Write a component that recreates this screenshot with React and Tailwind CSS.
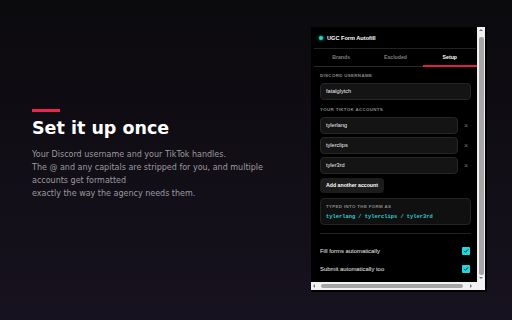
const accounts = ['tylerlang', 'tylerclips', 'tyler3rd']

function Label({ children }) {
  return (
    <div className="h-[6px] text-[4.4px] leading-[6px] font-bold uppercase tracking-[0.35px] text-[#8a8a8a]">
      {children}
    </div>
  )
}

function Check() {
  return (
    <div className="flex h-[8px] w-[8px] items-center justify-center rounded-[1px] bg-[#22d6dc]">
      <svg viewBox="0 0 10 10" className="h-[6px] w-[6px]">
        <path d="M2 5.2l2 2 4-4.4" fill="none" stroke="#0b2b2c" strokeWidth="1.6" strokeLinecap="round" strokeLinejoin="round" />
      </svg>
    </div>
  )
}

function Panel() {
  return (
    <div className="mt-[27px] flex h-[265px] w-[176px] shrink-0 flex-col bg-black pb-[2px] pr-[2px] font-['Liberation_Sans',sans-serif]">
      <div className="flex min-h-0 flex-1">
        <div className="flex-1 overflow-hidden">
          {/* header */}
          <div className="ml-[3px] mr-[1px] flex h-[22px] items-center gap-[4px] border-b border-[#222] pl-[5px] pt-[1px]">
            <div className="h-[4px] w-[4px] rounded-full bg-[#2dd4bf] shadow-[0_0_3px_#2dd4bf]" />
            <span className="text-[5.6px] font-bold text-white">UGC Form Autofill</span>
          </div>

          {/* tabs */}
          <div className="ml-[3px] flex h-[18px] border-b border-[#2a2a2a] pt-[1px] text-[5.2px] font-bold">
            <div className="flex flex-1 items-center justify-center text-[#7d7d7d]">Brands</div>
            <div className="flex flex-1 items-center justify-center text-[#7d7d7d]">Excluded</div>
            <div className="-mb-px flex flex-1 items-center justify-center border-b-2 border-[#e11d48] text-white">Setup</div>
          </div>

          <div className="flex flex-col pl-[9px] pr-[6px] pt-[6px]">
            <Label>Discord username</Label>
            <div className="mt-[4px] flex h-[17px] items-center rounded-[4px] border border-[#262626] bg-[#141414] px-[5px] text-[5.6px] font-medium text-[#ececec]">
              fatalglytch
            </div>

            <div className="mt-[7px]">
              <Label>Your TikTok accounts</Label>
            </div>
            <div className="mt-[4px] flex flex-col gap-[3px]">
              {accounts.map((a) => (
                <div key={a} className="flex items-center">
                  <div className="flex h-[17px] flex-1 items-center rounded-[4px] border border-[#262626] bg-[#141414] px-[5px] text-[5.6px] font-medium text-[#ececec]">
                    {a}
                  </div>
                  <div className="flex w-[13px] justify-center pl-[3px] text-[7px] leading-none text-[#777]">×</div>
                </div>
              ))}
            </div>

            <div className="mt-[4px] flex h-[15px] w-[64px] items-center justify-center rounded-[4px] bg-[#1c1c1c] text-[5.2px] font-bold text-white">
              Add another account
            </div>

            <div className="mt-[5px] flex h-[27px] flex-col justify-center gap-[4px] rounded-[4px] border border-[#232323] bg-[#101010] px-[5px]">
              <Label>Typed into the form as</Label>
              <div className="font-['Liberation_Mono',monospace] text-[5.4px] leading-[6px] font-bold text-[#25d0d6]">
                tylerlang / tylerclips / tyler3rd
              </div>
            </div>

            <div className="mt-[8px] border-t border-[#222]" />

            <div className="mt-[12px] flex h-[10px] items-center justify-between pr-[1px] text-[5.9px] font-medium text-[#eeeeee]">
              <span>Fill forms automatically</span>
              <Check />
            </div>
            <div className="mt-[8px] flex h-[10px] items-center justify-between pr-[1px] text-[5.9px] font-medium text-[#eeeeee]">
              <span>Submit automatically too</span>
              <Check />
            </div>
            <div className="mt-[7px] whitespace-nowrap text-[5px] leading-[6px] text-[#6b6b6b]">
              You can turn these off any time.
            </div>
          </div>
        </div>

        {/* vertical scrollbar */}
        <div className="flex w-[8px] flex-col items-center bg-[#f1f1f1] py-[2px]">
          <div className="h-0 w-0 border-x-[2px] border-b-[2px] border-x-transparent border-b-[#777]" />
          <div className="mt-[6px] w-[5px] flex-1 rounded-[2px] bg-[#a6a6a6]" />
          <div className="mt-[2px] mb-[1px] h-0 w-0 border-x-[2px] border-t-[2px] border-x-transparent border-t-[#777]" />
        </div>
      </div>

      {/* horizontal scrollbar */}
      <div className="flex h-[8px] items-center bg-[#f1f1f1] pl-[2px]">
        <div className="h-0 w-0 border-y-[2px] border-r-[2px] border-y-transparent border-r-[#777]" />
        <div className="ml-[6px] h-[4px] w-[142px] rounded-[2px] bg-[#a6a6a6]" />
        <div className="ml-[7px] h-0 w-0 border-y-[2px] border-l-[2px] border-y-transparent border-l-[#777]" />
      </div>
    </div>
  )
}

export default function App() {
  return (
    <div className="flex h-[320px] w-[512px] overflow-hidden bg-gradient-to-b from-[#0b0a0d] to-[#17121f] pl-[32px]">
      <div className="w-[279px] shrink-0 pt-[109px] font-['DejaVu_Sans',sans-serif]">
        <div className="h-[3px] w-[28px] bg-[#e8264f]" />
        <h1 className="mt-[6px] text-[17.5px] leading-[21px] font-bold text-white">Set it up once</h1>
        <p className="mt-[9px] w-[262px] text-[8px] leading-[13px] text-[#9c9a9f]">
          Your Discord username and your TikTok handles.
          <br />
          The @ and any capitals are stripped for you, and multiple accounts get formatted
          <br />
          exactly the way the agency needs them.
        </p>
      </div>
      <Panel />
    </div>
  )
}
